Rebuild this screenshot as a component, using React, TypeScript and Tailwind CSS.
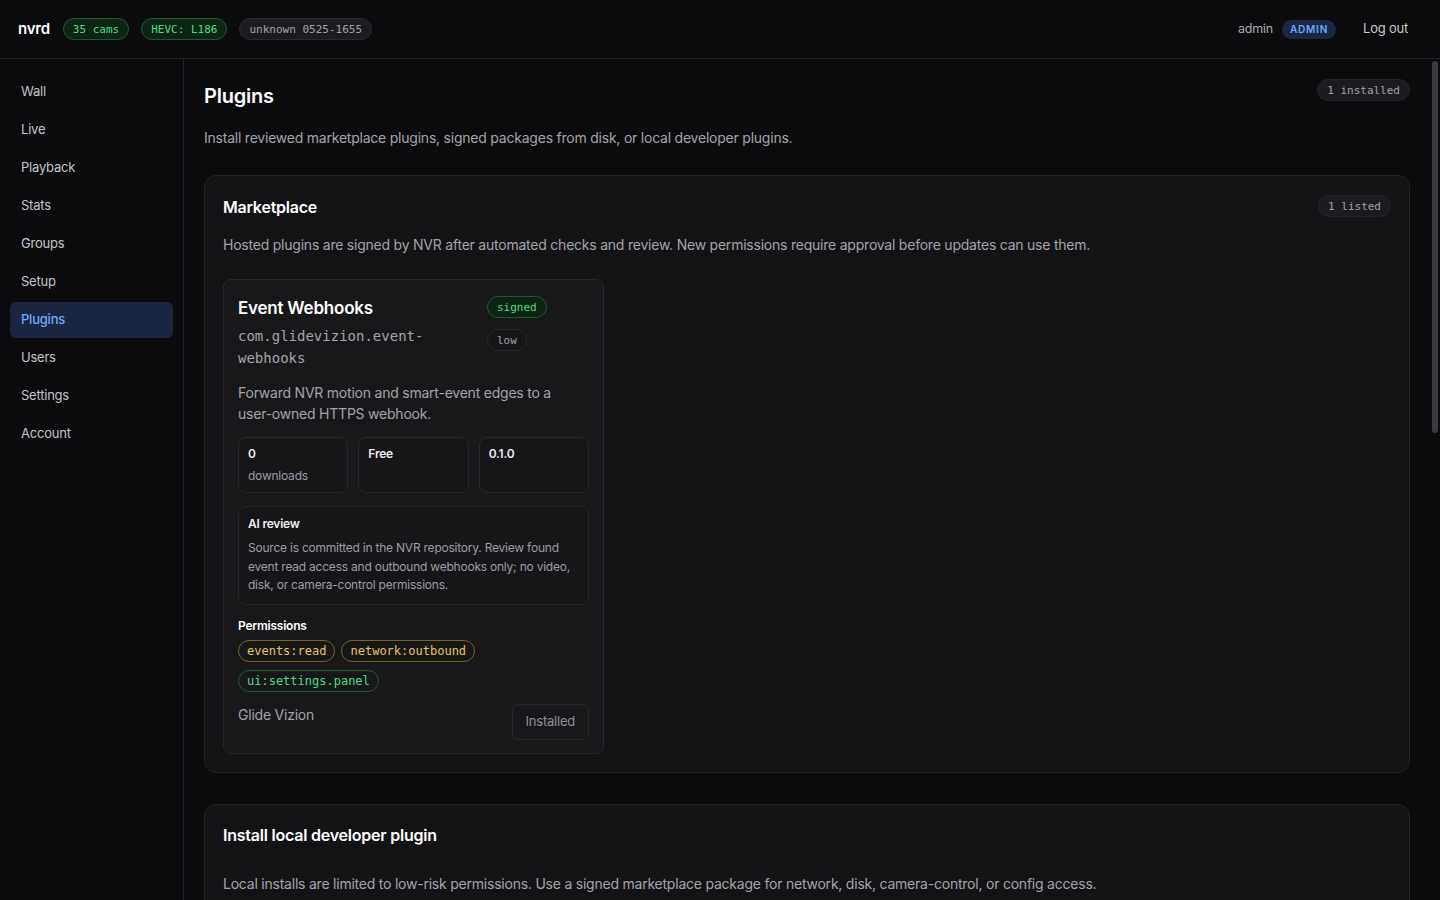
const navItems = ["Wall", "Live", "Playback", "Stats", "Groups", "Setup", "Plugins", "Users", "Settings", "Account"];

const mono = { fontFamily: '"DejaVu Sans Mono", "Liberation Mono", monospace', letterSpacing: 0 };

const Pill = ({ children, className }: { children: React.ReactNode; className: string }) => (
  <span style={mono} className={`inline-flex items-center rounded-full border px-[9px] h-[22px] text-[11px] leading-none ${className}`}>
    {children}
  </span>
);

const Stat = ({ value, label }: { value: string; label?: string }) => (
  <div className="h-[56px] rounded-lg border border-[#26262b] bg-[#161619] px-[9px] pt-[7px]">
    <div className="text-[12px] font-semibold leading-[18px] text-[#ececef]">{value}</div>
    {label && <div className="mt-[4px] text-[12px] leading-[18px] text-[#9d9da6]">{label}</div>}
  </div>
);

const App = () => {
  return (
    <div
      className="flex h-screen flex-col bg-[#0b0b0d] tracking-[-0.014em] text-[#e8e8eb]"
      style={{ fontFamily: 'Inter, "Noto Sans", sans-serif' }}
    >
      {/* top bar */}
      <header className="flex h-[59px] shrink-0 items-center border-b border-[#222226] pl-[18px] pr-[32px]">
        <span className="mr-[13px] text-[15px] font-semibold text-white">nvrd</span>
        <div className="flex items-center gap-3">
          <Pill className="border-[#1f5a2e] bg-[#0e2415] text-[#4ade80]">35 cams</Pill>
          <Pill className="border-[#1f5a2e] bg-[#0e2415] text-[#4ade80]">HEVC: L186</Pill>
          <Pill className="border-[#2a2a2f] bg-[#1c1c20] text-[#a1a1aa]">unknown 0525-1655</Pill>
        </div>
        <div className="ml-auto flex items-center">
          <span className="text-[12.5px] text-[#a8a8b0]">admin</span>
          <span className="ml-[9px] rounded-full bg-[#1a2846] px-[8px] py-[2px] text-[10px] font-semibold tracking-[0.08em] text-[#6ea8fe]">
            ADMIN
          </span>
          <span className="ml-[27px] text-[13px] text-[#c8c8ce]">Log out</span>
        </div>
      </header>

      <div className="flex min-h-0 flex-1">
        {/* sidebar */}
        <aside className="w-[184px] shrink-0 border-r border-[#222226] px-[10px] pt-[15px]">
          <nav className="flex flex-col gap-[2px]">
            {navItems.map((item) => (
              <div
                key={item}
                className={`flex h-[36px] items-center rounded-md px-[11px] text-[13px] ${
                  item === "Plugins" ? "bg-[#1a2540] font-medium text-[#6ea8fe]" : "text-[#c4c4ca]"
                }`}
              >
                {item}
              </div>
            ))}
          </nav>
        </aside>

        {/* main */}
        <div className="relative min-w-0 flex-1">
          <main className="h-full overflow-y-auto pb-[40px] pl-[20px] pr-[30px]">
            <div className="flex items-start justify-between pt-[24px]">
              <h1 className="text-[20px] font-semibold leading-[26px] text-white">Plugins</h1>
              <Pill className="mt-[-4px] border-[#232327] bg-[#1c1c20] text-[#a1a1aa]">1 installed</Pill>
            </div>
            <p className="mt-[19px] text-[14px] leading-[20px] text-[#a3a3ab]">
              Install reviewed marketplace plugins, signed packages from disk, or local developer plugins.
            </p>

            {/* marketplace */}
            <section className="mt-[27px] rounded-xl border border-[#232328] bg-[#131316] p-[18px]">
              <div className="flex items-start justify-between">
                <h2 className="mt-[2px] text-[16px] font-semibold leading-[22px] text-white">Marketplace</h2>
                <Pill className="mt-px border-[#232327] bg-[#1c1c20] text-[#a1a1aa]">1 listed</Pill>
              </div>
              <p className="mt-[17px] text-[14px] leading-[20px] text-[#a3a3ab]">
                Hosted plugins are signed by NVR after automated checks and review. New permissions require approval before updates can use them.
              </p>

              <div className="mt-[24px] w-[381px] rounded-lg border border-[#26262b] bg-[#18181b] px-[14px] pb-[13px] pt-[15px]">
                <div className="flex gap-3">
                  <div className="min-w-0 flex-1">
                    <h3 className="text-[17px] font-semibold leading-[26px] text-white">Event Webhooks</h3>
                    <div style={mono} className="mt-[4px] break-words text-[14px] leading-[22px] text-[#a3a3ab]">
                      com.glidevizion.event-webhooks
                    </div>
                  </div>
                  <div className="flex w-[102px] shrink-0 flex-col items-start gap-[11px] pt-px">
                    <Pill className="border-[#1f5a2e] bg-[#0e2415] text-[#4ade80]">signed</Pill>
                    <Pill className="border-[#26262b] bg-[#161619] text-[#a1a1aa]">low</Pill>
                  </div>
                </div>

                <p className="mt-[13px] text-[14px] leading-[21px] text-[#a3a3ab]">
                  Forward NVR motion and smart-event edges to a <span className="whitespace-nowrap">user-owned</span> HTTPS webhook.
                </p>

                <div className="mt-[13px] grid grid-cols-3 gap-[10px]">
                  <Stat value="0" label="downloads" />
                  <Stat value="Free" />
                  <Stat value="0.1.0" />
                </div>

                <div className="mt-[13px] rounded-lg border border-[#26262b] bg-[#161619] px-[9px] pb-[9px] pt-[8px]">
                  <div className="text-[12px] font-semibold leading-[18px] text-[#ececef]">AI review</div>
                  <p className="mt-[6px] text-[12px] leading-[18.5px] text-[#9d9da6]">
                    Source is committed in the NVR repository. Review found event read access and outbound webhooks only; no video, disk, or camera-control permissions.
                  </p>
                </div>

                <div className="mt-[12px] text-[12px] font-semibold leading-[18px] text-white">Permissions</div>
                <div className="mt-[5px] flex flex-wrap gap-x-[6px] gap-y-[8px]">
                  {[
                    { p: "events:read", c: "border-[#7a6222] text-[#e6c35a]" },
                    { p: "network:outbound", c: "border-[#7a6222] text-[#e6c35a]" },
                    { p: "ui:settings.panel", c: "border-[#1f5a2e] text-[#4ade80]" },
                  ].map(({ p, c }) => (
                    <span
                      key={p}
                      style={mono}
                      className={`inline-flex h-[22px] items-center rounded-full border px-[8px] text-[12px] ${c}`}
                    >
                      {p}
                    </span>
                  ))}
                </div>

                <div className="mt-[12px] flex items-start justify-between">
                  <span className="pt-[1px] text-[14px] leading-[20px] text-[#a3a3ab]">Glide Vizion</span>
                  <button className="h-[36px] rounded-md border border-[#26262b] bg-[#18181b] px-[13px] text-[13px] text-[#8f8f98]">
                    Installed
                  </button>
                </div>
              </div>
            </section>

            {/* local install */}
            <section className="mt-[31px] rounded-xl border border-[#232328] bg-[#131316] p-[18px]">
              <h2 className="mt-[1px] text-[16px] font-semibold leading-[22px] text-white">
                Install local developer plugin
              </h2>
              <p className="mt-[28px] text-[14px] leading-[20px] text-[#a3a3ab]">
                Local installs are limited to low-risk permissions. Use a signed marketplace package for network, disk, camera-control, or config access.
              </p>
              <div className="mt-[20px] flex flex-col gap-3">
                <label className="text-[12px] font-semibold text-[#ececef]">Plugin directory</label>
                <div className="h-[38px] rounded-md border border-[#26262b] bg-[#0f0f12]" />
                <label className="text-[12px] font-semibold text-[#ececef]">Plugin id</label>
                <div className="h-[38px] rounded-md border border-[#26262b] bg-[#0f0f12]" />
                <div>
                  <button className="h-[36px] rounded-md border border-[#26262b] bg-[#1c1c20] px-[14px] text-[13px] text-[#c8c8ce]">
                    Install local plugin
                  </button>
                </div>
              </div>
            </section>

            <section className="mt-[31px] rounded-xl border border-[#232328] bg-[#131316] p-[18px]">
              <h2 className="text-[16px] font-semibold leading-[22px] text-white">Install signed package</h2>
              <p className="mt-[15px] text-[14px] leading-[20px] text-[#a3a3ab]">
                Upload a signed plugin package exported from the marketplace.
              </p>
              <div className="mt-[20px] h-[120px] rounded-lg border border-dashed border-[#2e2e33]" />
              <div className="mt-[16px]">
                <button className="h-[36px] rounded-md border border-[#26262b] bg-[#1c1c20] px-[14px] text-[13px] text-[#c8c8ce]">
                  Upload package
                </button>
              </div>
            </section>

            <section className="mt-[31px] rounded-xl border border-[#232328] bg-[#131316] p-[18px]">
              <h2 className="text-[16px] font-semibold leading-[22px] text-white">Installed plugins</h2>
              <div className="mt-[16px] flex items-center justify-between rounded-lg border border-[#26262b] bg-[#18181b] px-[14px] py-[12px]">
                <div>
                  <div className="text-[14px] font-semibold text-white">Event Webhooks</div>
                  <div style={mono} className="text-[12px] text-[#a3a3ab]">com.glidevizion.event-webhooks · 0.1.0</div>
                </div>
                <button className="h-[32px] rounded-md border border-[#26262b] px-[12px] text-[13px] text-[#c8c8ce]">
                  Configure
                </button>
              </div>
            </section>
          </main>
          {/* scrollbar thumb */}
          <div className="pointer-events-none absolute right-[2px] top-[2px] h-[372px] w-[6px] rounded-full bg-[#3a3a40]" />
        </div>
      </div>
    </div>
  );
};

export default App;
